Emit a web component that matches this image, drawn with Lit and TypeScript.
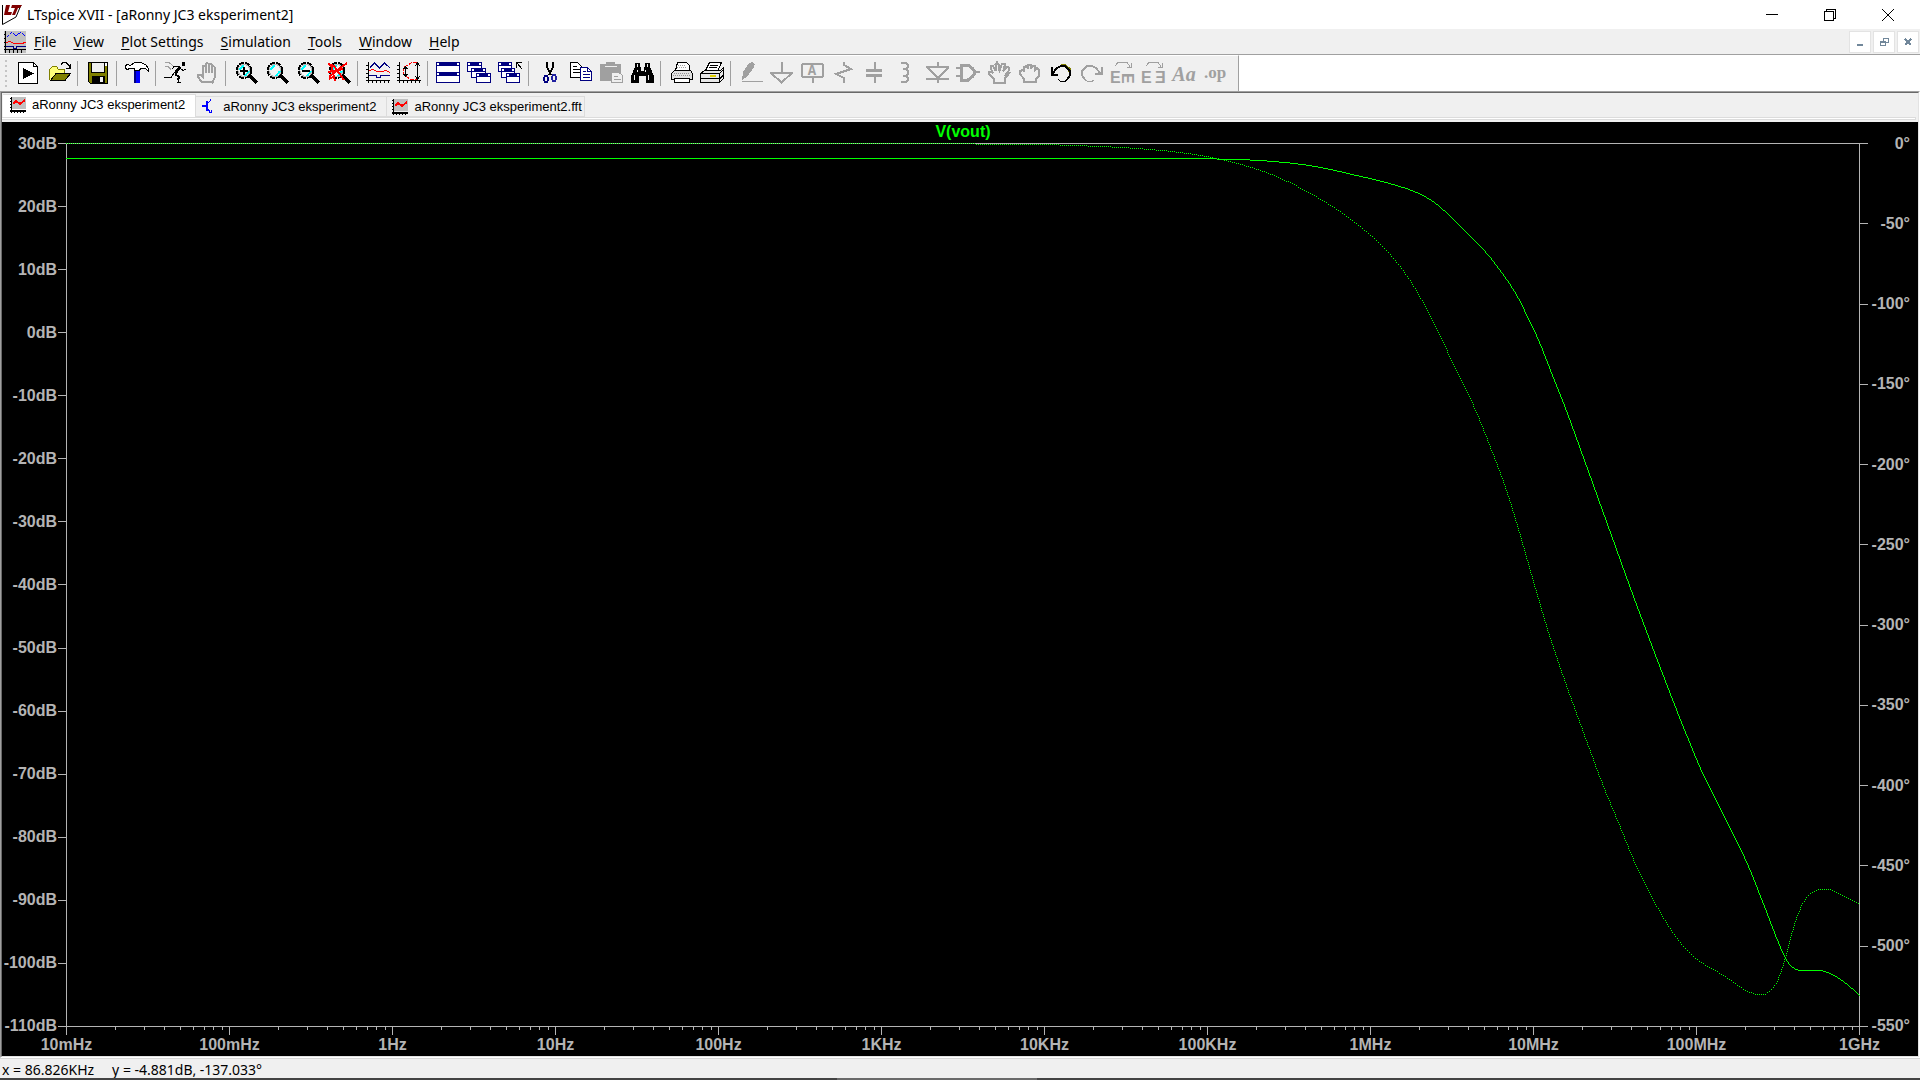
import { LitElement, html, svg, css, nothing, TemplateResult } from "lit";
import { customElement, property } from "lit/decorators.js";

type Pt = [number, number];

/* Plot area in viewBox units: x 66..1859, y 143..1026. */
const PLOT = { left: 66, top: 143, width: 1794, height: 884 };
const DECADES = ["10mHz", "100mHz", "1Hz", "10Hz", "100Hz", "1KHz", "10KHz", "100KHz", "1MHz", "10MHz", "100MHz", "1GHz"];
const DECIBELS = Array.from({ length: 15 }, (_, i) => `${30 - i * 10}dB`);
const DEGREES = Array.from({ length: 12 }, (_, i) => `${i === 0 ? 0 : -50 * i}°`);

const MAGNITUDE: Pt[] = [
  [66, 158], [1190, 158], [1220, 158.6], [1252, 159.6], [1280, 161.6], [1306, 164.6], [1328, 168.6], [1350, 173.6],
  [1380, 180.6], [1398, 185.6], [1412, 190.3], [1431, 200], [1443, 209.5], [1463, 228.7], [1488, 255], [1500, 270.6],
  [1510, 285], [1520, 302], [1528, 319], [1537, 337.5], [1550, 370], [1565, 408], [1580, 449], [1607, 524],
  [1637, 607], [1670, 694], [1687, 737], [1703, 775], [1720, 809], [1736, 841], [1747, 864], [1758, 891], [1767, 914],
  [1777, 940], [1785, 958], [1791, 966], [1800, 970], [1819, 970], [1828, 972.3], [1838, 977.6], [1848, 985], [1859, 995],
];
const PHASE: Pt[] = [
  [66, 143], [972, 143], [976, 143.6], [1053, 144.4], [1090, 145.6], [1114, 146.7], [1132, 147.7], [1158, 149.7],
  [1180, 152], [1210, 156.8], [1240, 163.8], [1273, 174.8], [1310, 193], [1343, 213.4], [1360, 226.4], [1377, 241],
  [1393, 258], [1410, 281], [1430, 316], [1456, 370.5], [1472, 403], [1495, 460], [1507, 493], [1517, 525.5],
  [1537, 595], [1548, 632], [1560, 668], [1587, 743], [1603, 786], [1617, 820], [1635, 864], [1647, 889], [1660, 912.5],
  [1670, 929], [1680, 942.5], [1690, 953.3], [1700, 961.5], [1713, 969], [1728, 978.4], [1742, 988], [1752, 992.7],
  [1757, 994], [1763, 994], [1769, 991], [1775, 983.5], [1780, 973], [1785, 957], [1790, 938], [1795, 921], [1800, 907.5],
  [1806, 897], [1813, 891], [1820, 889], [1827, 889], [1838, 893], [1848, 898], [1859, 904],
];

/* Monotone cubic (Fritsch-Carlson) interpolation, one sample per column. */
function columns(p: Pt[]): Pt[] {
  const n = p.length;
  const h = p.slice(1).map((q, i) => q[0] - p[i][0]);
  const s = p.slice(1).map((q, i) => (q[1] - p[i][1]) / h[i]);
  const m = p.map((_, i) => {
    if (i === 0) return s[0];
    if (i === n - 1) return s[n - 2];
    if (s[i - 1] * s[i] <= 0) return 0;
    const a = 2 * h[i] + h[i - 1];
    const b = h[i] + 2 * h[i - 1];
    return (a + b) / (a / s[i - 1] + b / s[i]);
  });
  const out: Pt[] = [];
  let i = 0;
  for (let x = p[0][0]; x <= p[n - 1][0]; x++) {
    while (i < n - 2 && x > p[i + 1][0]) i++;
    const t = (x - p[i][0]) / h[i];
    const u = 1 - t;
    const y = (1 + 2 * t) * u * u * p[i][1] + t * u * u * h[i] * m[i] + t * t * (3 - 2 * t) * p[i + 1][1] - t * t * u * h[i] * m[i + 1];
    out.push([x, Math.round(y)]);
  }
  return out;
}

/* Walks the curve one pixel at a time. */
function raster(points: Pt[]): Pt[] {
  const out: Pt[] = [points[0]];
  for (let i = 1; i < points.length; i++) {
    const [x0, y0] = points[i - 1];
    const [x1, y1] = points[i];
    const n = Math.max(Math.abs(x1 - x0), Math.abs(y1 - y0));
    for (let k = 1; k <= n; k++) {
      out.push([Math.round(x0 + ((x1 - x0) * k) / n), Math.round(y0 + ((y1 - y0) * k) / n)]);
    }
  }
  return out;
}

/* Solid trace: pixels merged into horizontal or vertical runs. */
function solid(px: Pt[]): string {
  let d = "";
  for (let i = 0; i < px.length; ) {
    const [x, y] = px[i];
    let j = i + 1;
    while (j < px.length && px[j][1] === y) j++;
    if (j > i + 1) {
      d += `M${x} ${y}h${j - i}v1h-${j - i}z`;
    } else {
      while (j < px.length && px[j][0] === x) j++;
      const top = Math.min(y, px[j - 1][1]);
      d += `M${x} ${top}h1v${j - i}h-1z`;
    }
    i = j;
  }
  return d;
}

/* Dotted trace: every second pixel. */
const dotted = (px: Pt[]) => px.filter((_, i) => i % 2 === 0).map(([x, y]) => `M${x} ${y}h1v1h-1z`).join("");

const MAGNITUDE_PATH = solid(raster(columns(MAGNITUDE)));
const PHASE_PATH = dotted(raster(columns(PHASE)));

function tickPath(): string {
  let d = "";
  const decade = (PLOT.width - 1) / 11;
  for (let k = 0; k < 12; k++) {
    const x = PLOT.left + Math.round(k * decade);
    d += `M${x} 1027h1v8h-1z`;
    if (k === 11) break;
    for (let m = 2; m < 10; m++) {
      d += `M${PLOT.left + Math.round((k + Math.log10(m)) * decade)} 1027h1v3h-1z`;
    }
  }
  return d;
}
const TICKS = tickPath();

const G = "#a0a0a0";
const lens = svg`
  <circle cx="14" cy="9.5" r="7.5" fill="#f4f4f4" stroke="#000" stroke-width="2" stroke-dasharray="5 1"/>
  <circle cx="14" cy="9.5" r="6" fill="none" stroke="#b8b8b8"/>
  <path d="M9.5 9l4-5M15 15l4-5" stroke="#00ffff" stroke-width="2" fill="none"/>
  <path d="M19 14l8 8" stroke="#000" stroke-width="3"/>`;
const win = (x: number, y: number, w: number, h: number) => svg`
  <rect x=${x + 0.5} y=${y + 0.5} width=${w - 1} height=${h - 1} fill="#fff" stroke="#000080"/>
  <rect x=${x} y=${y} width=${w} height="4" fill="#000080"/>
  <path d="M${x + 1} ${y + 1}h2v2h-2zM${x + w - 3} ${y + 1}h2v2h-2z" fill="#fff"/>`;
const axes = svg`<path d="M6.5 1v21M4 19.5h24M4 4.5h3M4 8.5h3M4 12.5h3M4 16.5h3M10.5 19v3M14.5 19v3M18.5 19v3M22.5 19v3M26.5 19v3" stroke="#000" fill="none"/>`;

const ICONS: Record<string, TemplateResult> = {
  run: svg`<path d="M6.5 1.5H21.5L25.5 5.5V22.5H6.5Z" fill="#fff" stroke="#000"/><path d="M21.5 1.5V5.5H25.5" stroke="#000" fill="none"/><path d="M11 7V18L22 12.5Z"/>`,
  open: svg`<path d="M6.5 19V8.5L9.5 5.5H13.5L15.5 8.5H21.5V12" fill="#ffff7a" stroke="#808000"/><path d="M7 20L13 12.5H27.5L22 19.5H7" fill="#808000" stroke="#000"/><path d="M18 3.5L20 1.5H23L26 4.5V7M27.5 3V7.5H23" stroke="#000" fill="none"/>`,
  save: svg`<path d="M6.5 1.5H25.5V22.5H8.5L6.5 20.5Z" fill="#808000" stroke="#000"/><rect x="9.5" y="1.5" width="13" height="10" fill="#efefef" stroke="#000"/><path d="M10 14.5H23V22H10Z"/><rect x="18" y="16" width="3" height="5" fill="#efefef"/><path d="M23 2h2v3h-2z" fill="#fff"/>`,
  hammer: svg`<path d="M13 9h6v13h-6z" fill="#0000ff"/><path d="M13 9h2v13h-2z" fill="#000080"/><path d="M4.5 4.5L6.5 3.5L9.5 4.5L13.5 1.5H19.5L24.5 3.5L27.5 7.5V10.5L24.5 7.5H19.5L18.5 9.5H13.5V7.5H8.5L6.5 8.5L4.5 7.5Z" fill="#fff" stroke="#000"/>`,
  runner: svg`<path d="M22 1h3v4h-3z"/><path d="M20 6L15 12.5" stroke="#000" stroke-width="3"/><path d="M20 5.5H14L11.5 8.5M20 7L23 9.5L26 8M15 12L19 15.5L18 21.5H21M14 12L11 16.5H4" stroke="#000" fill="none"/><path d="M15 13L19 16L18 19" stroke="#000" stroke-width="2" fill="none"/><path d="M5 1.5h4l4 3M5 5.5h3l3 3" stroke="#a0a0a0" fill="none"/>`,
  halt: svg`<path d="M11 21L6.5 15.5V13.5H9L11.5 15.5V5.5L13 4.5L14.5 5.5V12V3L16 1.5L17.5 3V12V3.5L19 2.5L20.5 3.5V12V6L22 4.5L23.5 6V17L21.5 21.5Z" fill="#efefef" stroke=${G} stroke-width="2"/>`,
  zoomIn: svg`${lens}<path d="M10 10h8M14 6v8" stroke="#000" stroke-width="2"/>`,
  zoomBox: svg`${lens}`,
  zoomOut: svg`${lens}<path d="M10 10h8" stroke="#000" stroke-width="2"/>`,
  zoomFit: svg`${lens}<path d="M5 3L11 5L21 19M24 2L13 10L6 16M5 11L20 8M8 4L12 20M6 18L10 16" stroke="#ff0000" stroke-width="2" fill="none"/>`,
  traces: svg`${axes}<path d="M8 6.5L12.5 2L17.5 7L22.5 2L28 7" stroke="#000080" fill="none"/><path d="M7 9.5L11 8.5L15 10.5H20L24 9.5L28 11.5" stroke="#ff0000" fill="none"/><path d="M7 14.5H14.5V16.5H18.5V14.5H28" stroke="#000080" fill="none"/>`,
  autorange: svg`${axes}<path d="M24 1.5H19L10 7V13L17 18H24" stroke="#ff0000" fill="none" stroke-dasharray="4 1"/><path d="M24.5 2v16M22 5l2.5-3L27 5M22 15l2.5 3L27 15M12.5 6v9M10.5 8l2-2 2 2M10.5 13l2 2 2-2" stroke="#000" fill="none"/>`,
  tile: svg`${win(4, 1, 24, 11)}${win(4, 11, 24, 11)}`,
  cascade: svg`${win(4, 1, 15, 10)}${win(8, 7, 15, 10)}${win(13, 12, 15, 10)}`,
  closeAll: svg`${win(4, 1, 14, 10)}${win(7, 7, 14, 10)}${win(12, 12, 14, 10)}<path d="M22.5 7V1.5H28M23 2L28 8" stroke="#000" fill="none"/>`,
  cut: svg`<path d="M14 1V6L18 14M20 1V6L16 14" stroke="#000" stroke-width="2" fill="none"/><ellipse cx="13" cy="18" rx="2" ry="3" fill="none" stroke="#000080" stroke-width="2"/><ellipse cx="21" cy="17" rx="2" ry="3" fill="none" stroke="#2020a0" stroke-width="2"/>`,
  copy: svg`<path d="M6.5 1.5H13.5L17.5 5.5V16.5H6.5Z" fill="#fff" stroke="#000"/><path d="M9 5.5h4M9 8.5h7M9 11.5h7" stroke="#000"/><path d="M16.5 6.5H23.5L27.5 10.5V19.5H16.5Z" fill="#fff" stroke="#000080"/><path d="M23.5 6.5V10.5H27.5M19 10.5h3M19 13.5h7M19 16.5h7" stroke="#000080" fill="none"/>`,
  paste: svg`<path d="M5 3H11V1H20V3H26V20H5Z" fill=${G}/><path d="M10 5.5h12" stroke="#efefef"/><path d="M16.5 11.5H24L27.5 14.5V21.5H16.5Z" fill="#efefef" stroke=${G}/><path d="M19 15.5h4M19 18.5h7" stroke=${G}/>`,
  find: svg`<path d="M9 2h5v4h1v4h3V6h1V2h5v4l4 9v7h-8v-7h-7v7H5v-7l4-9z"/><path d="M11 3v3M21 3v3M8 14v5M22 14v5M11 9v2M19 9v2" stroke="#efefef"/>`,
  print: svg`<path d="M10.5 9.5L12.5 1.5H21.5L24.5 4.5V9.5" fill="#fff" stroke="#000"/><path d="M13 4.5h8M12 6.5h10" stroke="#a0a0a0" stroke-dasharray="1 1"/><path d="M6.5 12.5L9.5 9.5H25.5L27.5 12.5V18.5H6.5Z" fill="#e0e0e0" stroke="#000"/><path d="M9 12.5h16M8 14.5h17" stroke="#909090" stroke-dasharray="1 1"/><path d="M9.5 17.5H24.5V21.5H9.5Z" fill="#fff" stroke="#000"/>`,
  setup: svg`<path d="M9.5 9.5L13.5 1.5H25.5L21.5 10.5" fill="#fff" stroke="#000"/><path d="M14 4.5h8M13 6.5h8" stroke="#000"/><path d="M4.5 12.5L8.5 9.5H24.5L27.5 6.5V17.5L23.5 21.5H4.5Z" fill="#e8e8e8" stroke="#000"/><path d="M4.5 12.5H23.5V22M23.5 12.5L27.5 8.5M5 17.5h18M23.5 18.5L27.5 13.5" stroke="#000" fill="none"/><path d="M14 15h6" stroke="#e0d000" stroke-width="2"/>`,
  wire: svg`<path d="M7 20.5H28" stroke=${G}/><path d="M7 19L8 11L14 2L17 1L20 3L19 6L12 16Z" fill=${G}/>`,
  ground: svg`<path d="M16 1V11" stroke=${G} stroke-width="2"/><path d="M4 12H27" stroke=${G} stroke-width="2"/><path d="M5 12L15.5 21.5L26 12" stroke=${G} stroke-width="2" fill="none"/>`,
  label: svg`<rect x="5" y="3" width="21" height="13" rx="2" fill="none" stroke=${G} stroke-width="2"/><path d="M16 16v6" stroke=${G} stroke-width="2"/><text x="15" y="14" text-anchor="middle" class="label">A</text>`,
  resistor: svg`<path d="M16 1V4L23 8L8 13L16 17V22" stroke=${G} stroke-width="2" fill="none"/>`,
  capacitor: svg`<path d="M16 1V9M16 15V22" stroke=${G} stroke-width="2"/><path d="M7 9.5H23M7 14.5H23" stroke=${G} stroke-width="3"/>`,
  inductor: svg`<path d="M11 2H16L18 4V6L16 8H13H16L18 10V13L16 15H13H16L18 17V19L16 21H11" stroke=${G} stroke-width="2" fill="none"/>`,
  diode: svg`<path d="M17 1V6M17 18V22M5 6H28M5 18H28M7 7L17 17L27 7" stroke=${G} stroke-width="2" fill="none"/>`,
  gate: svg`<path d="M9.5 4V19H16L21 15L23 11.5L21 8L16 4Z" stroke=${G} stroke-width="3" fill="none"/><path d="M4 7H9M4 15H9M23 11H28" stroke=${G} stroke-width="2"/>`,
  move: svg`<path d="M11 21.5V18L5.5 12.5V10.5H8L10 12.5L7.5 6.5V4.5H9.5L13 10L12.5 3.5L14 1.5L15.5 3.5L16.5 9.5L19 2.5H21.5V5.5L20 10.5L24 5.5L26 6.5V9.5L23 13.5L26 12.5L21.5 18V21.5Z" stroke=${G} stroke-width="2" fill="#efefef"/>`,
  drag: svg`<path d="M10 21V18L6 13V10L9 9L10 11V6L13 5L14 8V4L17 4V8L18 5L21 5V9L23 7L25 9V15L22 18V21Z" stroke=${G} stroke-width="2" fill="#efefef"/>`,
  undo: svg`<path d="M16 4.5H20L24 8V11" stroke="#808000" stroke-width="3" fill="none"/><path d="M6.5 6V13.5H13M7 13L12 7L16 5H20L25 10V14L22 19" stroke="#000" stroke-width="2" fill="none"/><path d="M13 18.5L16 20.5H20L23 18" stroke="#000" fill="none"/>`,
  redo: svg`<path d="M25.5 6V12.5H19M24 12L20 7L16 5H11L6 10V14L9 19" stroke=${G} stroke-width="2" fill="none"/><path d="M8 18L12 20.5H16L18 19" stroke=${G} fill="none"/>`,
  rotate: svg`<path d="M8 5L11 1.5H20L23 5.5M24.5 2V6.5H20" stroke=${G} fill="none"/><text x="3" y="22" class="edge">E</text><text class="edge" transform="translate(15 12) rotate(90)">E</text>`,
  mirror: svg`<path d="M8 5L11 1.5H20L23 5.5M24.5 2V6.5H20" stroke=${G} fill="none"/><text x="3" y="22" class="edge">E</text><text x="17" y="22" class="edge">Ǝ</text>`,
  text: svg`<text x="15" y="20" text-anchor="middle" class="aa">Aa</text>`,
  directive: svg`<text x="15" y="17" text-anchor="middle" class="op">.op</text>`,
};

const GROUPS: [string, string][][] = [
  [["run", "Run"], ["open", "Open"]],
  [["save", "Save"]],
  [["hammer", "Control Panel"]],
  [["runner", "Run simulation"], ["halt", "Halt"]],
  [["zoomIn", "Zoom in"], ["zoomBox", "Zoom"], ["zoomOut", "Zoom out"], ["zoomFit", "Zoom full extents"]],
  [["traces", "Pick traces"], ["autorange", "Autorange"]],
  [["tile", "Tile windows"], ["cascade", "Cascade windows"], ["closeAll", "Close all windows"]],
  [["cut", "Cut"], ["copy", "Copy"], ["paste", "Paste"], ["find", "Find"]],
  [["print", "Print"], ["setup", "Print setup"]],
  [["wire", "Wire"], ["ground", "Ground"], ["label", "Label net"], ["resistor", "Resistor"], ["capacitor", "Capacitor"],
   ["inductor", "Inductor"], ["diode", "Diode"], ["gate", "Component"], ["move", "Move"], ["drag", "Drag"],
   ["undo", "Undo"], ["redo", "Redo"], ["rotate", "Rotate"], ["mirror", "Mirror"], ["text", "Text"], ["directive", "SPICE directive"]],
];

@customElement("tool-bar")
export class ToolBar extends LitElement {
  static styles = css`
    :host { display: flex; background: #fff; height: 36px; }
    .band { display: flex; align-items: center; background: #f0f0f0; border-top: 1px solid #fff; border-right: 1px solid #a0a0a0; padding: 0 7px 0 5px; }
    .grip { width: 2px; height: 28px; margin-right: 5px; background: repeating-linear-gradient(#c4c4c4 0 2px, #f0f0f0 2px 5px); }
    .sep { width: 1px; height: 25px; margin: 0 4px 0 3px; background: #a0a0a0; }
    button { display: block; box-sizing: border-box; width: 31px; height: 35px; padding: 5px 0 6px; border: 0; background: none; }
    svg { display: block; width: 31px; height: 24px; shape-rendering: crispEdges; }
    .label { font: bold 14px "Liberation Mono", monospace; fill: #a0a0a0; }
    .edge { font: bold 16px "Liberation Sans", sans-serif; fill: #a0a0a0; }
    .aa { font: italic bold 20px "Liberation Serif", serif; fill: #a0a0a0; }
    .op { font: bold 17px "Liberation Serif", serif; fill: #a0a0a0; }
  `;
  render() {
    return html`<div class="band" role="toolbar" aria-label="Main">
      <span class="grip"></span>
      ${GROUPS.map((group, i) => html`${i ? html`<span class="sep"></span>` : nothing}${group.map(
        ([icon, name]) => html`<button aria-label=${name}><svg viewBox="0 0 31 24">${ICONS[icon]}</svg></button>`
      )}`)}
    </div>`;
  }
}

@customElement("wave-plot")
export class WavePlot extends LitElement {
  static styles = css`
    :host {
      display: grid;
      grid-template-columns: 64px 1fr 58px;
      grid-template-rows: 21px 1fr 29px;
      background: #000;
      color: #b4b4b4;
      font: bold 16px/18px "Liberation Sans", Arial, sans-serif;
      min-height: 0;
    }
    .trace { grid-column: 2; color: #00ff00; text-align: center; line-height: 20px; }
    .scale { grid-row: 2; display: flex; flex-direction: column; justify-content: space-between; }
    .left { grid-column: 1; }
    .right { grid-column: 3; }
    .mark { display: flex; align-items: center; justify-content: flex-end; height: 1px; gap: 1px; white-space: nowrap; }
    .right .mark { flex-direction: row-reverse; justify-content: space-between; padding-right: 8px; }
    .tick { flex: none; width: 8px; height: 1px; background: #b4b4b4; }
    svg { grid-column: 2; grid-row: 2; width: 100%; height: 100%; overflow: visible; shape-rendering: crispEdges; }
    .frame { fill: #b4b4b4; }
    .curve { fill: #00ff00; }
    .freq { grid-column: 2; grid-row: 3; display: flex; justify-content: space-between; padding-top: 9px; }
    .hz { width: 1px; display: flex; justify-content: center; white-space: nowrap; }
  `;
  private scale(side: string, labels: string[]) {
    return html`<div class="scale ${side}">
      ${labels.map((t) => html`<div class="mark"><span>${t}</span><span class="tick"></span></div>`)}
    </div>`;
  }
  render() {
    return html`
      <div class="trace">V(vout)</div>
      ${this.scale("left", DECIBELS)}
      <svg viewBox="66 143 1794 884" preserveAspectRatio="none" role="img" aria-label="V(vout) magnitude and phase">
        <path class="frame" d="M66 143h1794v1h-1794zM66 1026h1794v1h-1794zM66 144h1v882h-1zM1859 144h1v882h-1z"></path>
        <path class="frame" d=${TICKS}></path>
        <path class="curve" d=${PHASE_PATH}></path>
        <path class="curve" d=${MAGNITUDE_PATH}></path>
      </svg>
      ${this.scale("right", DEGREES)}
      <div class="freq">${DECADES.map((t) => html`<span class="hz">${t}</span>`)}</div>`;
  }
}

const chartIcon = svg`<path d="M2 1h14v12H2z" fill="#c0c0c0"/><path d="M1.5 1v16M0 14.5h16M0 2.5h2M0 5.5h2M0 8.5h2M0 11.5h2M4.5 14v3M7.5 14v3M10.5 14v3M13.5 14v3" stroke="#000" stroke-width="1"/><path d="M0 14h16v2H0z"/><path d="M3 8L6 5L10 8L15 4" stroke="#ff0000" stroke-width="2" fill="none"/>`;
const circuitIcon = svg`<path d="M1 8H5" stroke="#0000ff" stroke-width="2"/><path d="M6 3V13" stroke="#0000ff" stroke-width="2"/><path d="M6 6.5L10 1.5M6 10L10 15M7.5 14.5H10.5V11.5" stroke="#0000ff" fill="none"/>`;

@customElement("doc-tab")
export class DocTab extends LitElement {
  @property() name = "";
  @property({ type: Boolean, reflect: true }) active = false;
  @property({ type: Boolean }) schematic = false;
  static styles = css`
    :host { display: flex; margin-top: 3px; height: 19px; border: 1px solid #dcdcdc; border-left: 0; }
    :host([active]) { margin-top: 1px; height: 23px; background: #fff; border-bottom: 0; }
    button { display: flex; align-items: center; gap: 6px; border: 0; background: none; padding: 0 10px 0 5px; color: #000; font: 13px "Liberation Sans", Arial, sans-serif; }
    :host([active]) button { padding: 0 10px 4px 7px; }
    :host(:last-child) button { padding-right: 2px; }
    svg { width: 16px; height: 17px; shape-rendering: crispEdges; }
  `;
  render() {
    return html`<button role="tab" aria-selected=${this.active ? "true" : "false"}>
      <svg viewBox="0 0 16 17">${this.schematic ? circuitIcon : chartIcon}</svg>${this.name}
    </button>`;
  }
}

const MENUS = ["File", "View", "Plot Settings", "Simulation", "Tools", "Window", "Help"];

@customElement("app-root")
export class AppRoot extends LitElement {
  static styles = css`
    :host { display: flex; flex-direction: column; height: 100vh; background: #f0f0f0; color: #000; font: 14px/20px "Noto Sans", "Open Sans", sans-serif; }
    button { border: 0; padding: 0; background: none; font: inherit; color: inherit; }
    svg { display: block; shape-rendering: crispEdges; }
    .title { display: flex; align-items: center; height: 29px; background: #fff; padding: 0 3px 0 2px; }
    .title h1 { flex: 1; margin: 0 0 0 5px; font: inherit; }
    .title button { width: 58px; height: 28px; display: grid; place-items: center; }
    .logo { width: 20px; height: 20px; shape-rendering: auto; }
    .menu { display: flex; align-items: center; height: 25px; border-bottom: 1px solid #a0a0a0; padding-left: 4px; }
    .menu nav { flex: 1; display: flex; gap: 17px; padding-left: 8px; }
    .menu u { text-decoration: underline 1px; text-underline-offset: 2px; text-decoration-skip-ink: none; }
    .child { display: flex; gap: 2px; padding-right: 1px; }
    .child button { width: 22px; height: 22px; border: 1px solid #e3e3e3; background: #fff; display: grid; place-items: center; }
    .client { flex: 1; min-height: 0; display: flex; border: 1px solid; border-color: #a0a0a0 #fff #fff #a0a0a0; }
    .sunken { flex: 1; min-width: 0; display: flex; flex-direction: column; border: 1px solid; border-color: #696969 #e3e3e3 #e3e3e3 #696969; }
    .tabs { display: flex; align-items: flex-start; height: 24px; padding-left: 1px; }
    .page { height: 1px; margin: 0 2px 2px 0; border: 1px solid #dcdcdc; border-left: 0; background: #fff; }
    wave-plot { flex: 1; }
    .status { display: flex; gap: 18px; height: 19px; padding-left: 2px; border-top: 1px solid #d7d7d7; overflow: hidden; line-height: 22px; }
    .edge { display: flex; height: 2px; background: #444; }
    .edge i { width: 200px; margin-left: 837px; background: #6a6a6a; }
  `;
  render() {
    return html`
      <header class="title">
        <svg class="logo" viewBox="0 0 20 20"><path d="M.5 0V19.5L14 12L19 0" fill="#fff" stroke="#000"/><path d="M4 0H8L6 7H10L9 10H2ZM10 0H20L18 3H16L13 10H10L13 3H9Z" fill="#800000"/></svg>
        <h1>LTspice XVII - [aRonny JC3 eksperiment2]</h1>
        <button aria-label="Minimize"><svg width="12" height="12"><path d="M0 5.5h12" stroke="#000"/></svg></button>
        <button aria-label="Restore"><svg width="12" height="12"><path d="M.5 2.5h9v9h-9zM2.5 2V.5h9v9H10" stroke="#000" fill="none"/></svg></button>
        <button aria-label="Close"><svg width="12" height="12"><path d="M0 0L12 12M12 0L0 12" stroke="#000"/></svg></button>
      </header>
      <div class="menu">
        <svg width="22" height="22" viewBox="0 0 22 22"><path d="M0 0h22v22H0z" fill="#c0c0c0"/><path d="M1.5 0v22M0 18.5h22M0 3.5h2M0 7.5h2M0 11.5h2M0 15.5h2M5.5 18v4M9.5 18v4M13.5 18v4M17.5 18v4" stroke="#000"/><path d="M3 6L8 1L12 5L17 1L21 5" stroke="#0000ff" fill="none" stroke-dasharray="3 1"/><path d="M2 11.5L6 10.5L10 12.5H17L22 11.5" stroke="#ff0000" fill="none"/><path d="M2 15.5H9.5V17.5H12.5V15.5H22" stroke="#000080" fill="none"/></svg>
        <nav>${MENUS.map((m) => html`<button><u>${m[0]}</u>${m.slice(1)}</button>`)}</nav>
        <div class="child">
          <button aria-label="Minimize document"><svg width="10" height="10"><path d="M2 7h6v2H2z" fill="#71879a"/></svg></button>
          <button aria-label="Restore document"><svg width="10" height="10"><path d="M1.5 4.5h5v4h-5zM1 5h6M4 1.5h5v4H7M4 2v2" stroke="#71879a" fill="none"/></svg></button>
          <button aria-label="Close document"><svg width="10" height="10"><path d="M2 2L8 8M8 2L2 8" stroke="#71879a" stroke-width="2"/></svg></button>
        </div>
      </div>
      <tool-bar></tool-bar>
      <main class="client">
        <div class="sunken">
          <div class="tabs" role="tablist">
            <doc-tab active name="aRonny JC3 eksperiment2"></doc-tab>
            <doc-tab schematic name="aRonny JC3 eksperiment2"></doc-tab>
            <doc-tab name="aRonny JC3 eksperiment2.fft"></doc-tab>
          </div>
          <div class="page"></div>
          <wave-plot></wave-plot>
        </div>
      </main>
      <footer class="status"><span>x = 86.826KHz</span><span>y = -4.881dB, -137.033°</span></footer>
      <div class="edge"><i></i></div>`;
  }
}
